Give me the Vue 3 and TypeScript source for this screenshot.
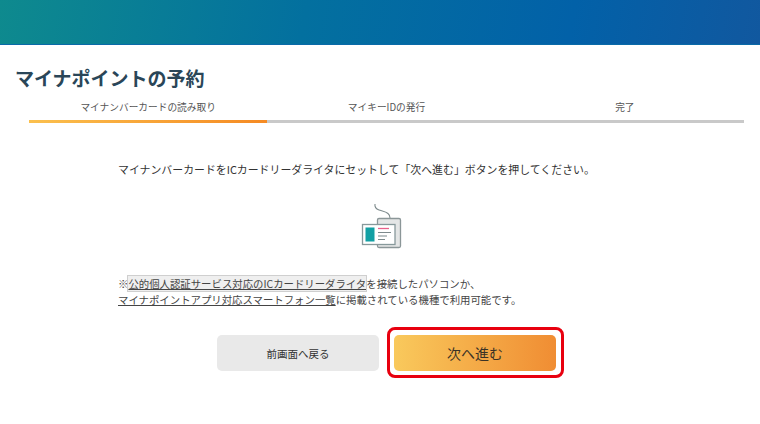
<script setup lang="ts">
const steps: { label: string; active: boolean }[] = [
  { label: 'マイナンバーカードの読み取り', active: true },
  { label: 'マイキーIDの発行', active: false },
  { label: '完了', active: false },
]
</script>

<template>
  <div class="page">
    <header class="band"></header>
    <h1 class="title">マイナポイントの予約</h1>
    <ol class="steps">
      <li v-for="s in steps" :key="s.label" class="step">
        <span class="step-label">{{ s.label }}</span>
        <span class="bar" :class="{ on: s.active }"></span>
      </li>
    </ol>
    <main class="body">
      <p class="lead">マイナンバーカードをICカードリーダライタにセットして「次へ進む」ボタンを押してください。</p>
      <div class="icon-row">
        <svg width="42" height="46" viewBox="0 0 42 46" fill="none">
          <path d="M15 1c-.5 3 1 5 4 6s7 1.500 9 3.500c1.500 1.300 2 2.500 2 4.500" stroke="#7d8a8c" stroke-width="1.100" />
          <rect x="17.500" y="15.500" width="23" height="29" rx="1.500" fill="#e4e6e6" stroke="#8b9698" stroke-width="1.300" />
          <rect x="2.500" y="21.500" width="32.500" height="20" fill="#fff" stroke="#87999b" stroke-width="1.300" />
          <rect x="5.500" y="24.500" width="9" height="14" fill="#12a0a4" />
          <path d="M18 25.500h11" stroke="#e8608a" stroke-width="1.300" />
          <path d="M18 29.500h13M18 33h9M18 36.500h7" stroke="#7d8a8c" stroke-width="1.100" />
        </svg>
      </div>
      <p class="note">
        ※<a class="boxed">公的個人認証サービス対応のICカードリーダライタ</a>を接続したパソコンか、<br />
        <a class="under">マイナポイントアプリ対応スマートフォン一覧</a>に掲載されている機種で利用可能です。
      </p>
      <div class="actions">
        <button class="btn back" type="button">前画面へ戻る</button>
        <div class="highlight">
          <button class="btn next" type="button">次へ進む</button>
        </div>
      </div>
    </main>
  </div>
</template>

<style>
html, body { margin: 0; background: #fff; }
</style>

<style scoped>
.page {
  width: 760px;
  height: 424px;
  overflow: hidden;
  background: #fff;
  font-family: "Noto Sans CJK JP", "Liberation Sans", sans-serif;
  color: #333;
}
.band {
  height: 45px;
  background: linear-gradient(100deg, #0e8a8e 0%, #03709f 40%, #0261a8 75%, #11589f 100%);
  border-bottom: 1px solid #0a6aa8;
  box-sizing: border-box;
}
.title {
  margin: 21px 0 0 15px;
  font-size: 19px;
  line-height: 24px;
  font-weight: 700;
  color: #2a4658;
}
.steps {
  list-style: none;
  display: flex;
  margin: 10px 16px 0 29px;
  padding: 0;
}
.step {
  flex: 1;
  display: flex;
  flex-direction: column;
  align-items: center;
  gap: 6px;
}
.step-label {
  font-size: 9.700px;
  line-height: 14px;
  color: #555;
}
.bar {
  align-self: stretch;
  height: 3px;
  background: #c9c9c9;
}
.bar.on {
  background: linear-gradient(90deg, #fbc04e, #f58a23);
}
.body {
  padding: 0 0 0 118px;
}
.lead {
  margin: 38px 0 0;
  font-size: 10.900px;
  line-height: 16px;
  color: #333;
  white-space: nowrap;
}
.icon-row {
  display: flex;
  margin: 26px 0 0 242px;
  height: 46px;
}
.note {
  margin: 27px 0 0;
  font-size: 10.400px;
  line-height: 16px;
  color: #444;
  white-space: nowrap;
}
.boxed {
  color: #444;
  text-decoration: underline;
  background: #efefef;
  outline: 1px solid #cfcfcf;
}
.under {
  color: #444;
  text-decoration: underline;
}
.actions {
  display: flex;
  align-items: flex-start;
  gap: 8px;
  margin: 19px 0 0 99px;
}
.btn {
  display: block;
  border: 0;
  width: 162px;
  height: 36px;
  border-radius: 5px;
  font-family: inherit;
  padding: 0;
}
.back {
  margin-top: 8px;
  background: #e9e9e9;
  font-size: 10.500px;
  color: #333;
}
.next {
  background: linear-gradient(90deg, #f9c95c, #f08d33);
  font-size: 14px;
  color: #3a3226;
}
.highlight {
  padding: 5px 5px 4px 4px;
  border: 3px solid #e8000f;
  border-radius: 8px;
  background: #fff;
}
</style>
